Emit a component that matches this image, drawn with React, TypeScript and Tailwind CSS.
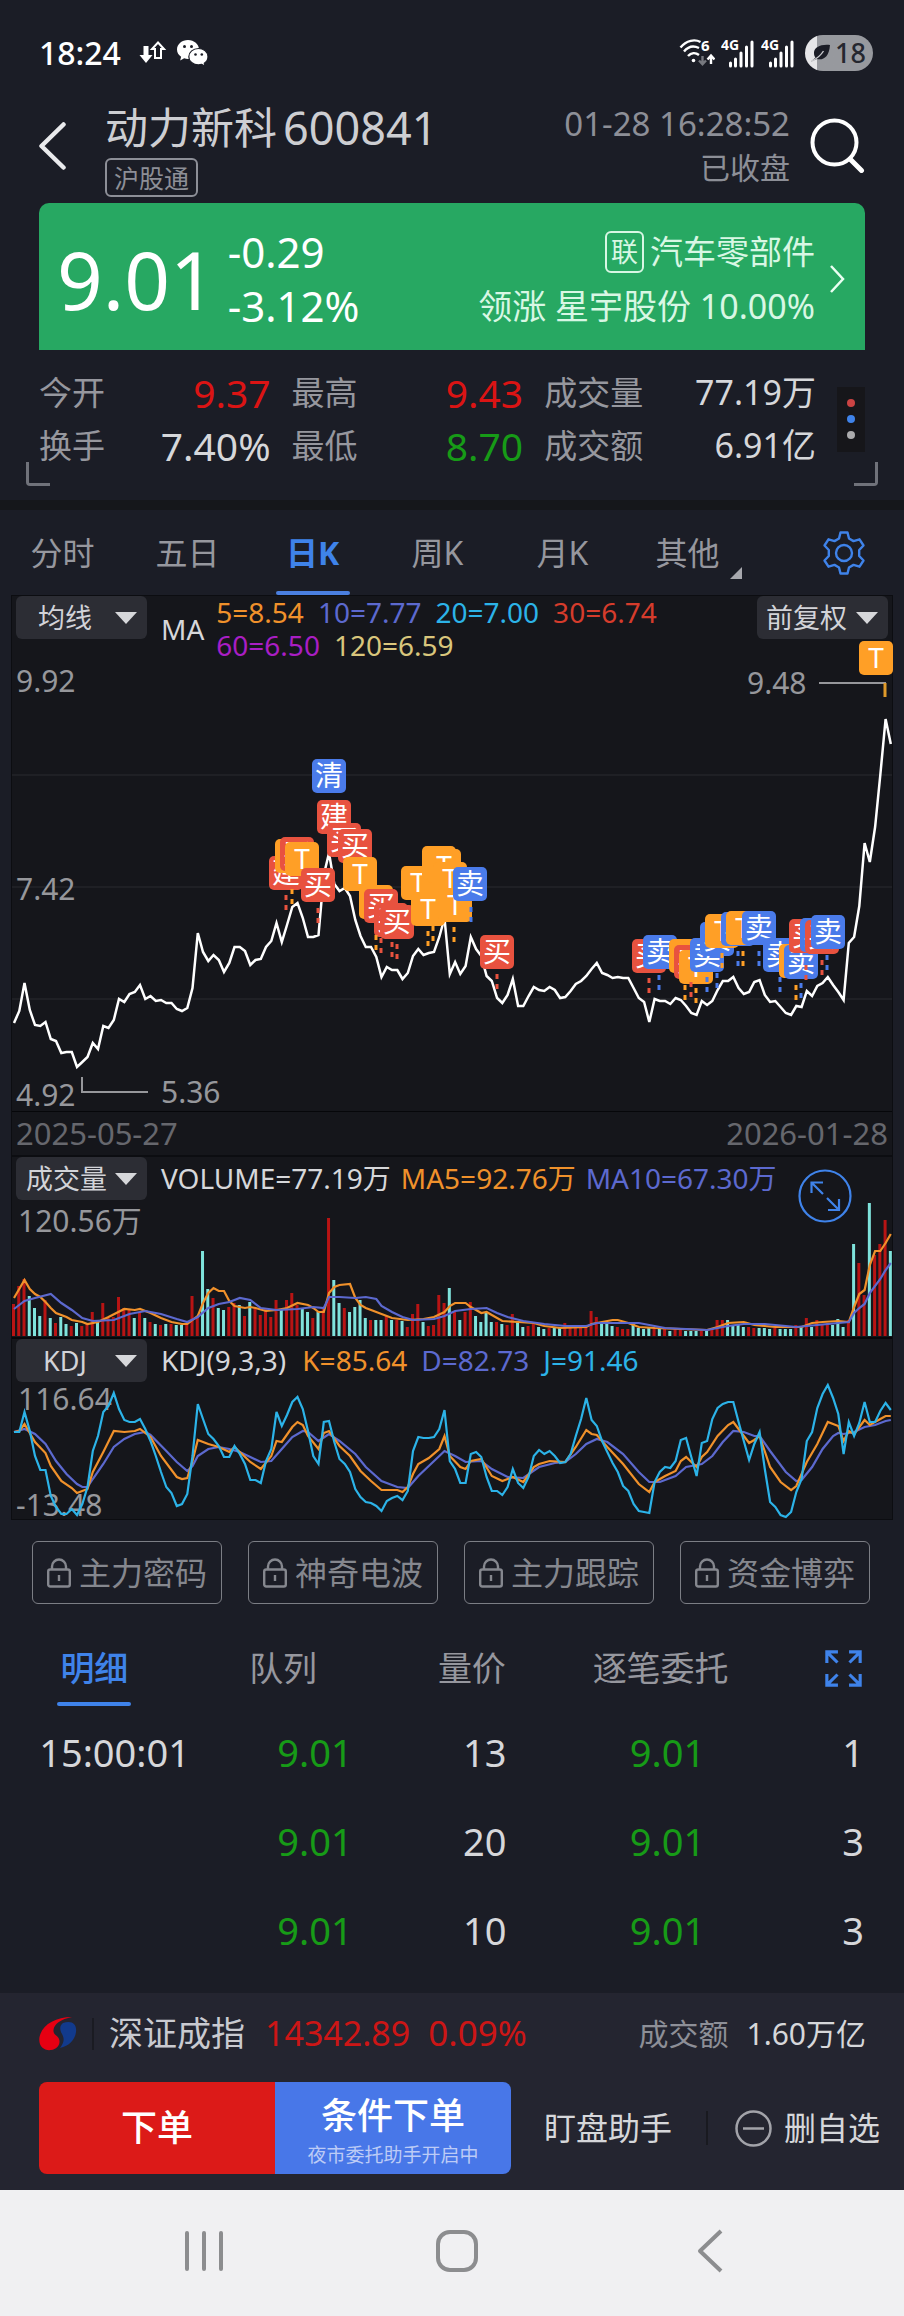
import React from 'react';

type Point = [number, number];
type Tone = 'red' | 'blue' | 'orange';

const TONES: Record<Tone, string> = {
  red: '#e8523f',
  blue: '#4a7bea',
  orange: '#ff9f26',
};

const BARS = 168;
const CHART_WIDTH = 880;
const STEP = CHART_WIDTH / (BARS - 0.4);

const xAt = (i: number) => 2 + i * STEP;
const toPath = (points: Point[]) => points.map(([i, y]) => `${xAt(i).toFixed(1)},${y}`).join(' ');

// "index:y" pairs, whitespace separated
const parse = (src: string): Point[] =>
  src
    .trim()
    .split(/\s+/)
    .map((pair) => pair.split(':').map(Number) as Point);

const CLOSES: Point[] = [
  363, 351, 323, 350, 365, 366, 362, 379, 381, 393, 392, 392, 407, 402, 397, 383, 389, 366, 368, 360,
  339, 342, 334, 332, 325, 339, 336, 341, 340, 343, 343, 349, 351, 348, 328, 273, 292, 301, 295, 300,
  312, 303, 287, 287, 291, 305, 300, 299, 287, 281, 263, 282, 265, 247, 243, 258, 277, 277, 275, 215,
  193, 224, 231, 228, 236, 260, 276, 287, 287, 297, 317, 307, 310, 310, 319, 313, 296, 289, 295, 293,
  292, 277, 258, 314, 302, 314, 306, 277, 289, 296, 316, 321, 338, 343, 335, 319, 346, 346, 336, 327,
  330, 331, 327, 330, 338, 337, 331, 324, 321, 316, 309, 303, 313, 315, 318, 317, 318, 318, 328, 338,
  342, 362, 339, 341, 341, 344, 338, 340, 346, 353, 355, 341, 345, 341, 330, 321, 321, 317, 328, 334,
  332, 322, 320, 335, 342, 341, 347, 353, 355, 346, 347, 331, 336, 326, 323, 317, 325, 332, 340, 283,
  277, 246, 183, 202, 167, 115, 59, 84,
].map((y, i) => [i, y]);

// r = up day, c = down day, followed by the bar height
const VOLUMES = `
r32 r50 r57 c40 c28 c20 r36 c18 r13 c19 c12 r10 c13 r10 r13 r24 c16 r33 r18 r19
r39 r28 r26 c18 r23 c18 r14 c12 r11 c12 r12 c11 c11 r12 r40 r19 c85 c47 r38 c28
c26 r29 r33 c31 r20 c34 r28 r21 r28 r19 r36 c26 r36 r43 r31 c28 c24 r18 c24 r28
r118 c56 c33 r28 c24 c29 c36 c18 r16 c16 c16 r20 c16 r16 c15 r9 r22 r32 c14 r10
r11 r41 r33 c48 r24 c16 r24 r34 c20 c14 c23 c14 r14 c12 r11 r22 c14 c9 r10 r12
c9 c7 r8 c8 c8 r13 r9 r9 r9 r9 r25 r19 c12 c12 c10 r9 r7 r7 c14 c8
c7 c8 r7 c8 r7 c5 r7 r6 c5 c5 c5 r5 c5 r7 r16 r16 c16 c11 c11 c9
r9 r8 c8 c8 c7 r8 c7 c7 c7 r11 c9 r18 c9 r16 r12 r13 c11 c17 c9 r16
c92 r73 r41 c133 r81 r92 r116 c85`
  .trim()
  .split(/\s+/);

const VOL_MA5 = parse(`0:98 2:80 3:89 4:94 5:97 6:102 7:108 8:113 10:117 11:120 13:122 14:124 16:122 18:117
21:109 23:110 24:109 26:113 28:118 30:122 32:124 33:124 34:120 35:116 36:103 37:93 38:88 39:91 40:91 41:101
42:106 44:108 45:107 46:108 48:111 50:110 52:108 54:103 56:105 57:108 58:112 59:112 60:93 61:87 62:85 64:84
65:98 66:105 67:108 69:112 72:118 75:120 78:119 80:117 82:112 83:106 84:103 86:103 87:107 88:110 89:113 90:112
91:115 93:121 96:122 99:123 101:126 104:128 109:127 110:124 112:122 114:120 115:120 117:123 119:127 122:128
132:130 134:127 136:123 139:122 141:125 145:127 150:127 152:123 154:122 157:121 159:122 160:107 161:94 162:90
163:65 164:51 165:51 166:43 167:34`);

const VOL_MA10 = parse(`0:109 2:101 4:98 7:94 9:103 11:110 13:118 15:121 19:120 22:114 25:111 28:114 31:119 33:122
35:117 37:108 39:104 41:102 43:98 45:100 47:108 50:110 54:109 57:107 59:108 60:97 62:97 65:98 67:97 69:99
70:106 72:112 74:117 76:120 80:119 82:116 84:111 87:109 90:108 92:113 94:117 97:121 101:124 105:126 109:126
111:123 115:123 119:123 124:128 132:130 136:126 139:124 143:124 149:127 153:125 159:122 160:113 161:108
162:104 163:93 165:79 166:70 167:63`);

const KDJ_K = parse(`0:50 1:49 2:42 4:60 6:71 7:84 9:99 11:106 12:111 14:107 15:90 17:70 19:49 21:50 23:49 24:47 26:55
28:74 31:95 32:97 33:96 34:79 35:58 37:62 39:65 41:70 42:65 45:80 47:87 49:74 50:59 51:60 53:45 54:40 55:43
56:54 58:67 59:51 60:49 62:64 64:74 66:89 68:99 70:108 73:108 74:110 75:105 76:92 77:82 79:76 81:67 82:54
83:74 85:85 86:87 87:79 89:77 91:94 93:99 95:95 97:100 99:85 100:82 102:79 105:80 107:65 109:48 110:52 111:53
113:65 116:82 119:102 121:110 122:100 124:94 126:89 127:79 128:75 130:85 131:75 132:70 134:54 136:43 137:40
138:47 140:61 141:58 142:54 144:85 146:100 148:108 149:104 151:80 153:62 155:40 157:44 158:59 159:49 160:52
162:38 163:43 165:37 166:34 167:34`);

const KDJ_D = parse(`0:50 2:47 4:52 6:62 8:79 10:92 12:102 13:105 14:105 15:97 17:82 19:65 21:57 23:52 25:50 26:53
29:69 31:80 33:89 34:84 35:74 37:67 39:65 41:67 43:70 45:75 47:80 49:79 51:67 53:55 55:49 56:50 58:59 60:52
62:59 65:72 67:85 70:99 73:105 75:106 77:94 79:84 81:74 82:69 84:74 86:80 89:79 91:87 94:95 97:96 100:85
103:81 105:80 107:72 109:62 111:57 113:60 116:72 119:90 121:100 123:100 126:94 128:85 131:82 133:74 135:60
137:49 139:50 141:54 142:54 144:69 147:90 149:99 150:98 152:85 154:67 156:54 157:51 158:52 160:50 162:45
164:43 166:39 167:38`);

const KDJ_J: Point[] = [
  50, 50, 30, 49, 74, 88, 88, 114, 125, 132, 132, 127, 133, 122, 105, 69, 54, 30, 24, 11,
  27, 38, 40, 40, 37, 47, 59, 74, 90, 105, 111, 124, 122, 112, 74, 22, 37, 52, 57, 64,
  75, 75, 64, 72, 82, 98, 98, 101, 79, 67, 30, 44, 33, 20, 15, 27, 49, 74, 82, 40,
  39, 60, 77, 82, 90, 107, 115, 120, 121, 124, 129, 119, 116, 114, 118, 109, 69, 55, 56, 56,
  55, 47, 28, 79, 87, 101, 101, 72, 70, 75, 95, 109, 109, 113, 105, 87, 101, 106, 95, 74,
  68, 72, 69, 74, 81, 80, 72, 54, 37, 16, 38, 44, 59, 70, 81, 90, 104, 109, 122, 129,
  130, 131, 100, 90, 85, 86, 79, 58, 56, 75, 94, 61, 59, 37, 26, 22, 20, 20, 40, 59,
  78, 62, 50, 87, 120, 125, 133, 135, 130, 110, 97, 59, 50, 26, 12, 3, 16, 32, 72, 40,
  54, 41, 20, 40, 40, 29, 21, 28,
].map((y, i) => [i, y]);

const MARKERS: [string, Tone, number, number][] = [
  ['建', 'red', 257, 196],
  ['T', 'orange', 263, 179],
  ['买', 'red', 268, 177],
  ['T', 'orange', 273, 182],
  ['买', 'red', 289, 208],
  ['清', 'blue', 300, 99],
  ['建', 'red', 305, 140],
  ['买', 'red', 315, 163],
  ['买', 'red', 326, 169],
  ['T', 'orange', 331, 197],
  ['T', 'orange', 347, 225],
  ['买', 'red', 352, 229],
  ['买', 'red', 362, 243],
  ['买', 'red', 368, 245],
  ['T', 'orange', 389, 206],
  ['T', 'orange', 410, 186],
  ['T', 'orange', 415, 189],
  ['T', 'orange', 421, 202],
  ['T', 'orange', 399, 232],
  ['T', 'orange', 426, 228],
  ['卖', 'blue', 441, 207],
  ['买', 'red', 468, 275],
  ['买', 'red', 620, 279],
  ['卖', 'blue', 631, 275],
  ['T', 'orange', 657, 279],
  ['买', 'red', 662, 285],
  ['T', 'orange', 667, 290],
  ['卖', 'blue', 678, 278],
  ['卖', 'blue', 688, 262],
  ['T', 'orange', 693, 254],
  ['卖', 'blue', 709, 252],
  ['T', 'orange', 714, 251],
  ['卖', 'blue', 730, 251],
  ['卖', 'blue', 751, 278],
  ['T', 'orange', 767, 284],
  ['卖', 'blue', 772, 285],
  ['买', 'red', 777, 259],
  ['卖', 'blue', 788, 258],
  ['买', 'red', 793, 260],
  ['卖', 'blue', 799, 255],
  ['T', 'orange', 847, -19],
];

const STEMS: [Tone, number, number][] = [
  ['red', 274, 235],
  ['orange', 280, 229],
  ['red', 306, 248],
  ['orange', 364, 275],
  ['red', 369, 278],
  ['red', 380, 282],
  ['red', 385, 284],
  ['orange', 416, 271],
  ['orange', 421, 266],
  ['orange', 442, 267],
  ['blue', 459, 247],
  ['red', 485, 314],
  ['red', 637, 318],
  ['blue', 647, 315],
  ['orange', 673, 325],
  ['red', 679, 322],
  ['orange', 684, 328],
  ['blue', 695, 317],
  ['blue', 705, 313],
  ['orange', 710, 293],
  ['blue', 726, 291],
  ['orange', 731, 291],
  ['blue', 747, 291],
  ['blue', 768, 317],
  ['orange', 784, 325],
  ['blue', 789, 323],
  ['red', 794, 305],
  ['red', 810, 300],
  ['blue', 815, 295],
];

const TRADES = [
  { time: '15:00:01', price: '9.01', volume: '13', orderPrice: '9.01', orderVolume: '1' },
  { time: '', price: '9.01', volume: '20', orderPrice: '9.01', orderVolume: '3' },
  { time: '', price: '9.01', volume: '10', orderPrice: '9.01', orderVolume: '3' },
];

function StatusBar() {
  return (
    <div className="flex h-[106px] items-center justify-between pr-[31px] pl-[39px]">
      <div className="flex items-center">
        <span className="text-[32px] leading-9 font-medium text-white">18:24</span>
        <svg className="ml-[18px]" width="28" height="24" viewBox="0 0 28 24">
          <path d="M4.500 5h5v9h4L7 22 .5 14h4z" fill="#fff" />
          <path d="M19 1.500l6 6.500h-3v9h-6V8h-3z" fill="none" stroke="#fff" strokeWidth="2" />
        </svg>
        <svg className="ml-2.5" width="32" height="27" viewBox="0 0 32 27">
          <path d="M11 0C4.900 0 0 4.200 0 9.500c0 3 1.600 5.600 4.100 7.300L3.200 20.500l4-2.200c1.200.4 2.500.6 3.800.6 6.100 0 11-4.200 11-9.400S17.100 0 11 0z" fill="#fff" />
          <circle cx="7.500" cy="6.500" r="1.500" fill="#1b1d26" />
          <circle cx="14.500" cy="6.500" r="1.500" fill="#1b1d26" />
          <path d="M21.500 8.500c-5.400 0-9.700 3.600-9.700 8.200s4.300 8.200 9.700 8.200c1.100 0 2.200-.2 3.200-.5l3.500 1.900-.9-3.100c2.300-1.500 3.700-3.800 3.700-6.500 0-4.600-4.200-8.200-9.500-8.200z" fill="#fff" stroke="#1b1d26" strokeWidth="1.200" />
          <circle cx="18.500" cy="14.500" r="1.300" fill="#1b1d26" />
          <circle cx="24.800" cy="14.500" r="1.300" fill="#1b1d26" />
        </svg>
      </div>
      <div className="flex items-center gap-1.5">
        <svg width="36" height="36" viewBox="0 0 36 36" fill="none" stroke="#fff">
          <path d="M1.500 12.500C7.500 5 16 4 21.500 7M5 16.500c4.500-5.500 10-6 15-3.500M9 21c3-3.300 7.500-3.700 11-1" strokeWidth="2.400" />
          <circle cx="14.500" cy="25.500" r="1.800" fill="#fff" stroke="none" />
          <path d="M23.500 21v8m-3.500-3.500l3.500 3.700 3.500-3.700" stroke="#77797f" strokeWidth="2.400" />
          <path d="M32 29v-8m-3.500 3.500L32 20.500l3.500 4" strokeWidth="2.400" />
          <text x="22" y="16" fill="#fff" stroke="none" className="text-[15px] font-bold">6</text>
        </svg>
        {['sim1', 'sim2'].map((sim) => (
          <svg key={sim} width="34" height="36" viewBox="0 0 34 36">
            <text x="0" y="15" fill="#fff" className="text-[14px] font-bold">4G</text>
            <path d="M9.500 28v3M14.500 24v7M20 18v13M25.500 12v19M31 7v24" stroke="#fff" strokeWidth="3" strokeLinecap="round" />
          </svg>
        ))}
        <div className="ml-1 flex h-9 w-[68px] items-center overflow-hidden rounded-full bg-linear-to-r from-[#e6e6e8] from-[18%] to-[#97999e] to-[18%] pl-1.5">
          <svg width="20" height="18" viewBox="0 0 20 18">
            <path d="M19 1C10 0 3 3 3 9c0 2 .6 3.500 1.500 4.500L0 17.500 6 15c6 1.500 12-1.500 13-14z" fill="#1b1d26" />
            <path d="M1 17C6 14.500 10 11 12.500 7" stroke="#c9cacd" strokeWidth="1.400" fill="none" />
          </svg>
          <span className="ml-1 text-[27px] leading-9 font-medium text-[#25272f]">18</span>
        </div>
      </div>
    </div>
  );
}

function Header() {
  return (
    <header className="flex h-[97px] items-start pr-[39px] pl-[39px]">
      <button type="button" aria-label="返回" className="mt-4">
        <svg width="28" height="48" viewBox="0 0 28 48" fill="none" stroke="#e9eaec" strokeWidth="4.500" strokeLinecap="round" strokeLinejoin="round">
          <path d="M24.500 2.500L2.500 24l22 21.500" />
        </svg>
      </button>
      <div className="ml-[38px]">
        <h1 className="flex items-center gap-1.5 leading-[43px] whitespace-nowrap text-[#cdced2]">
          <span className="text-[43px]">动力新科</span>
          <span className="text-[45px]">600841</span>
        </h1>
        <span className="mt-[9px] inline-block rounded-md border-2 border-[#8d8f97] px-[7px] pt-0.5 text-[25px] leading-[33px] text-[#8d8f97]">沪股通</span>
      </div>
      <div className="ml-auto text-right text-[#8d8f97]">
        <div className="text-[33px] leading-9">01-28 16:28:52</div>
        <div className="mt-2 text-[30px] leading-9">已收盘</div>
      </div>
      <button type="button" aria-label="搜索" className="mt-3 ml-5">
        <svg width="55" height="55" viewBox="0 0 55 55" fill="none" stroke="#fff" strokeLinecap="round">
          <circle cx="24.500" cy="24.500" r="22" strokeWidth="4" />
          <path d="M40 41l11.500 11.500" strokeWidth="5" />
        </svg>
      </button>
    </header>
  );
}

function QuoteCard() {
  return (
    <section className="mx-[39px] flex h-[147px] items-center rounded-t-[10px] bg-[#27a862] pt-1 pr-5 pl-[18px] text-white">
      <span className="text-[80px] leading-[80px]">9.01</span>
      <div className="ml-3 text-[42px] leading-[54px]">
        <div>-0.29</div>
        <div>-3.12%</div>
      </div>
      <a href="#sector" className="ml-auto flex items-center text-right text-[#d8f7e4]">
        <span>
          <span className="flex items-center justify-end gap-1.5 text-[33px] leading-[54px]">
            <span className="rounded-md border-2 border-[#d8f7e4] px-1 text-[27px] leading-[38px]">联</span>
            <span>汽车零部件</span>
          </span>
          <span className="block text-[34px] leading-[54px]">领涨 星宇股份 10.00%</span>
        </span>
        <svg className="ml-3.5" width="16" height="28" viewBox="0 0 16 28" fill="none" stroke="#e9fff2" strokeWidth="2.500">
          <path d="M2 1l12 13L2 27" />
        </svg>
      </a>
    </section>
  );
}

function Stat({ label, value, tone, large }: { label: string; value: string; tone: string; large?: boolean }) {
  return (
    <div className="flex h-[53px] items-center justify-between whitespace-nowrap">
      <dt className="text-[33px] leading-[53px] text-[#96979e]">{label}</dt>
      <dd className={`leading-[53px] ${large ? 'text-[39px]' : 'text-[34px]'} ${tone}`}>{value}</dd>
    </div>
  );
}

function Stats() {
  return (
    <section className="relative px-[39px] pt-4 pb-7">
      <dl className="grid grid-cols-[23fr_23fr_27fr_28px] gap-x-[21px]">
        <Stat label="今开" value="9.37" tone="text-[#db1414]" large />
        <Stat label="最高" value="9.43" tone="text-[#db1414]" large />
        <Stat label="成交量" value="77.19万" tone="text-[#d6d7da]" />
        <button type="button" aria-label="更多指标" className="row-span-2 flex h-[65px] flex-col items-center justify-center gap-2 self-center bg-[#16161a]">
          <span className="size-2 rounded-full bg-[#cb4343]" />
          <span className="size-2 rounded-full bg-[#3f83ea]" />
          <span className="size-2 rounded-full bg-[#ababad]" />
        </button>
        <Stat label="换手" value="7.40%" tone="text-[#d6d7da]" large />
        <Stat label="最低" value="8.70" tone="text-[#179b17]" large />
        <Stat label="成交额" value="6.91亿" tone="text-[#d6d7da]" />
      </dl>
      <span className="absolute bottom-3.5 left-[26px] h-6 w-6 rounded-bl border-b-3 border-l-3 border-[#70727a]" />
      <span className="absolute right-[26px] bottom-3.5 h-6 w-6 rounded-br border-r-3 border-b-3 border-[#70727a]" />
    </section>
  );
}

function PeriodTabs() {
  const tabs = ['分时', '五日', '日K', '周K', '月K', '其他'];
  return (
    <nav className="box-content flex h-[85px] border-t-10 border-[#15171b]">
      <div className="grid flex-1 grid-cols-6">
        {tabs.map((tab) => {
          const active = tab === '日K';
          return (
            <button
              key={tab}
              type="button"
              className={`relative text-[32px] leading-[85px] ${active ? 'font-bold text-[#3f83ea]' : 'text-[#96979e]'}`}
            >
              {tab}
              {active && <span className="absolute bottom-0 left-1/2 h-1 w-[74px] -translate-x-1/2 rounded-full bg-[#4a7fe0]" />}
              {tab === '其他' && (
                <svg className="absolute right-2 bottom-4" width="12" height="12" viewBox="0 0 12 12">
                  <path d="M12 0v12H0z" fill="#a7a8ad" />
                </svg>
              )}
            </button>
          );
        })}
      </div>
      <button type="button" aria-label="设置" className="mr-[38px] ml-[72px]">
        <svg width="44" height="44" viewBox="0 0 44 44" fill="none" stroke="#3f83ea" strokeWidth="2.400" strokeLinejoin="round">
          <path d="M18.500 1.500h7l1.500 6 4.500 2.600 6-1.800 4 6.200-4.300 4.500v6l4.300 4.500-4 6.200-6-1.800-4.500 2.600-1.500 6h-7l-1.500-6-4.500-2.600-6 1.800-4-6.200 4.300-4.500v-6L2.500 14.500l4-6.200 6 1.800L17 7.500z" />
          <circle cx="22" cy="22" r="8" />
        </svg>
      </button>
    </nav>
  );
}

function Picker({ label, options, pad }: { label: string; options: string[]; pad: string }) {
  return (
    <label className="relative block w-[131px] shrink-0">
      <select
        aria-label={label}
        className={`block h-[43px] w-full appearance-none rounded-md bg-[#2c2d34] text-[27px] leading-[43px] text-[#d2d3d8] ${pad}`}
      >
        {options.map((option) => (
          <option key={option}>{option}</option>
        ))}
      </select>
      <svg className="pointer-events-none absolute top-4 right-2.5" width="22" height="12" viewBox="0 0 22 12">
        <path d="M0 0h22L11 12z" fill="#d6d7da" />
      </svg>
    </label>
  );
}

function PriceChart() {
  return (
    <svg className="block h-auto w-full overflow-visible" viewBox="0 0 880 452" role="img" aria-label="日K走势">
      <path d="M0 115h880M0 227h880M0 339h880" stroke="#1f2025" strokeWidth="2" />
      <path d="M0 451.500h880" stroke="#06070a" strokeWidth="1" />
      <g fill="#96979b" className="text-[30px]">
        <text x="4" y="32">9.92</text>
        <text x="4" y="240">7.42</text>
        <text x="4" y="446">4.92</text>
        <text x="149" y="443">5.36</text>
        <text x="735" y="34">9.48</text>
      </g>
      <path d="M70 417v15h66M807 23h66v14" fill="none" stroke="#96979b" strokeWidth="2" />
      <polyline points={toPath(CLOSES)} fill="none" stroke="#fff" strokeWidth="2.500" />
      {MARKERS.map(([text, tone, x, y], i) => (
        <g key={i}>
          <rect x={x} y={y} width="34" height="34" rx="5" fill={TONES[tone]} />
          <text x={x + 17} y={y + 27} textAnchor="middle" fill="#fff" className="text-[28px]">
            {text}
          </text>
        </g>
      ))}
      {STEMS.map(([tone, x, y]) => (
        <path key={`${x}-${y}`} d={`M${x} ${y}v16`} stroke={TONES[tone]} strokeWidth="3" strokeDasharray="5 5" />
      ))}
      <path d="M873 23v14" stroke="#e09a2a" strokeWidth="3" />
    </svg>
  );
}

function VolumeChart() {
  return (
    <svg className="block h-auto w-full" viewBox="0 0 880 139" role="img" aria-label="成交量">
      <text x="6" y="32" fill="#96979b" className="text-[30px]">120.56万</text>
      {VOLUMES.map((bar, i) => {
        const height = Number(bar.slice(1));
        return (
          <rect key={i} x={xAt(i) - 2} y={136 - height} width="3" height={height} fill={bar[0] === 'r' ? '#b81414' : '#7fe3dc'} />
        );
      })}
      <polyline points={toPath(VOL_MA5)} fill="none" stroke="#f0912b" strokeWidth="2.200" />
      <polyline points={toPath(VOL_MA10)} fill="none" stroke="#5c69cf" strokeWidth="2.200" />
      <path d="M0 138h880" stroke="#06070a" strokeWidth="2" />
    </svg>
  );
}

function KdjChart() {
  return (
    <svg className="block h-auto w-full overflow-visible" viewBox="0 0 880 137" role="img" aria-label="KDJ">
      <g fill="#96979b" className="text-[30px]">
        <text x="6" y="28">116.64</text>
        <text x="4" y="134">-13.48</text>
      </g>
      <polyline points={toPath(KDJ_D)} fill="none" stroke="#5c69cf" strokeWidth="2.200" />
      <polyline points={toPath(KDJ_K)} fill="none" stroke="#f0912b" strokeWidth="2.200" />
      <polyline points={toPath(KDJ_J)} fill="none" stroke="#2cb3e8" strokeWidth="2.200" />
    </svg>
  );
}

function Charts() {
  return (
    <section className="mx-[11px] border border-[#0c0d11] bg-[#15161b]">
      <div className="flex h-16 items-start justify-between pr-1 pl-1">
        <div className="flex">
          <Picker label="主图指标" options={['均线', 'BOLL']} pad="pl-[22px]" />
          <span className="mt-4 ml-3.5 text-[28px] leading-[34px] text-[#d6d7da]">MA</span>
          <div className="ml-3 text-[28px] leading-[33px] whitespace-nowrap">
            <div className="flex gap-3.5">
              <span className="text-[#f0912b]">5=8.54</span>
              <span className="text-[#5c69cf]">10=7.77</span>
              <span className="text-[#2cb3e8]">20=7.00</span>
              <span className="text-[#d63c2c]">30=6.74</span>
            </div>
            <div className="flex gap-3.5">
              <span className="text-[#a91ec4]">60=6.50</span>
              <span className="text-[#d9c67c]">120=6.59</span>
            </div>
          </div>
        </div>
        <Picker label="复权方式" options={['前复权', '后复权', '不复权']} pad="pl-[9px]" />
      </div>
      <PriceChart />
      <div className="flex h-[45px] items-center justify-between border-b-2 border-[#0c0d11] px-1 text-[31px] text-[#66676d]">
        <time>2025-05-27</time>
        <time>2026-01-28</time>
      </div>
      <div className="relative">
        <div className="flex pl-1 text-[28px] leading-[43px] whitespace-nowrap">
          <Picker label="副图指标一" options={['成交量', 'MACD']} pad="pl-[10px]" />
          <span className="ml-3.5 text-[#d6d7da]">VOLUME=77.19万</span>
          <span className="ml-2.5 text-[#f0912b]">MA5=92.76万</span>
          <span className="ml-2.5 text-[#5c69cf]">MA10=67.30万</span>
        </div>
        <VolumeChart />
        <button type="button" aria-label="全屏" className="absolute top-3 right-10">
          <svg width="54" height="54" viewBox="0 0 54 54" fill="none" stroke="#3f83ea" strokeWidth="2.200">
            <circle cx="27" cy="27" r="25.500" />
            <path d="M25 25L13.500 13.500M13.500 24V13.500H25M29 29l12 12M41 30v11H30" />
          </svg>
        </button>
      </div>
      <div className="flex pl-1 text-[28px] leading-[43px] whitespace-nowrap">
        <Picker label="副图指标二" options={['KDJ', 'RSI']} pad="pl-[27px]" />
        <span className="ml-3.5 text-[#d6d7da]">KDJ(9,3,3)</span>
        <span className="ml-4 text-[#f0912b]">K=85.64</span>
        <span className="ml-3.5 text-[#5c69cf]">D=82.73</span>
        <span className="ml-3.5 text-[#2cb3e8]">J=91.46</span>
      </div>
      <KdjChart />
    </section>
  );
}

function LockedTools() {
  return (
    <section className="grid grid-cols-4 gap-[26px] pt-[21px] pr-[34px] pl-8">
      {['主力密码', '神奇电波', '主力跟踪', '资金博弈'].map((name) => (
        <button
          key={name}
          type="button"
          className="flex h-[63px] items-center justify-center gap-2 rounded-md border border-[#7c7e85] text-[32px] whitespace-nowrap text-[#85878e]"
        >
          <svg className="shrink-0" width="24" height="30" viewBox="0 0 24 30" fill="none" stroke="#85878e" strokeWidth="2.400">
            <rect x="1.200" y="11.500" width="21.600" height="17" rx="2" />
            <path d="M5 11.500V8.500a7 7 0 0 1 14 0v3M12 17v6" />
          </svg>
          {name}
        </button>
      ))}
    </section>
  );
}

function TradeTabs() {
  return (
    <nav className="mt-[26px] flex h-[76px] pr-[42px]">
      <div className="grid flex-1 grid-cols-4">
        {['明细', '队列', '量价', '逐笔委托'].map((tab) => {
          const active = tab === '明细';
          return (
            <button
              key={tab}
              type="button"
              className={`relative text-[34px] leading-[76px] ${active ? 'font-medium text-[#3f83ea]' : 'text-[#96979e]'}`}
            >
              {tab}
              {active && <span className="absolute bottom-0 left-1/2 h-1 w-[74px] -translate-x-1/2 rounded-full bg-[#3f83ea]" />}
            </button>
          );
        })}
      </div>
      <button type="button" aria-label="展开" className="ml-[70px]">
        <svg width="37" height="37" viewBox="0 0 40 40" fill="none" stroke="#3f83ea" strokeWidth="3.400">
          <path d="M2 14V2h12M3 3l10.500 10.500M26 2h12v12M37 3L26.500 13.500M2 26v12h12M3 37l10.500-10.500M26 38h12V26M37 37L26.500 26.500" />
        </svg>
      </button>
    </nav>
  );
}

function TradeTable() {
  return (
    <table className="mt-0.5 mb-[18px] w-full table-fixed text-right text-[38px] text-[#d6d7da]">
      <colgroup>
        <col className="w-[190px]" />
        <col className="w-[18%]" />
        <col className="w-[17%]" />
        <col className="w-[22%]" />
        <col />
      </colgroup>
      <tbody>
        {TRADES.map((trade, i) => (
          <tr key={i} className="h-[89px]">
            <td className="p-0">{trade.time}</td>
            <td className="p-0 text-[#179b17]">{trade.price}</td>
            <td className="p-0">{trade.volume}</td>
            <td className="p-0 text-[#179b17]">{trade.orderPrice}</td>
            <td className="py-0 pr-10 pl-0">{trade.orderVolume}</td>
          </tr>
        ))}
      </tbody>
    </table>
  );
}

function BottomPanel() {
  return (
    <footer className="bg-[#242530] pb-4">
      <div className="flex h-[89px] items-center pr-[38px] pb-2 pl-[39px] whitespace-nowrap">
        <svg width="38" height="34" viewBox="0 0 38 34">
          <path d="M33 0C16 0 3 8 .5 20-1 29 5 34 12 33c6-1 10-6 8-11-1.500-4-6-4-5.500-9C15 7 22 2 33 0z" fill="#e60012" />
          <path d="M24 6c9-3 14 1 13 9-1 8-7 14-16 16 5-7 4-10 2-14-2-4-3-8 1-11z" fill="#123a8c" />
        </svg>
        <span className="ml-[15px] h-8 w-0.5 bg-[#1a1b22]" />
        <span className="ml-[15px] text-[34px] text-[#c9cad0]">深证成指</span>
        <span className="ml-5 text-[34px] text-[#cc1616]">14342.89</span>
        <span className="ml-[18px] text-[35px] text-[#cc1616]">0.09%</span>
        <span className="ml-auto text-[30px] text-[#8d8f97]">成交额</span>
        <span className="ml-[18px] text-[30px] text-[#d6d7da]">1.60万亿</span>
      </div>
      <div className="flex items-center pr-6 pl-[39px] whitespace-nowrap text-[#d6d7da]">
        <button type="button" className="h-[92px] w-[236px] rounded-l-lg bg-[#dc1a18] text-[36px] font-medium text-white">
          下单
        </button>
        <button type="button" className="flex h-[92px] w-[236px] flex-col items-center justify-center rounded-r-lg bg-[#4877e8] pt-1 text-white">
          <span className="text-[36px] leading-[50px] font-medium">条件下单</span>
          <span className="text-[19px] leading-7 text-[#bccbf6]">夜市委托助手开启中</span>
        </button>
        <button type="button" className="ml-[33px] text-[32px]">盯盘助手</button>
        <span className="ml-auto h-[34px] w-0.5 bg-[#191a20]" />
        <button type="button" className="ml-[27px] flex items-center gap-3 text-[32px]">
          <svg width="37" height="37" viewBox="0 0 37 37" fill="none" stroke="#a2a3a9" strokeWidth="2.500">
            <circle cx="18.500" cy="18.500" r="17" />
            <path d="M8 18.500h21" />
          </svg>
          删自选
        </button>
      </div>
    </footer>
  );
}

function SystemNav() {
  return (
    <nav className="grid h-[126px] grid-cols-[253px_253px_253px] place-items-center justify-center bg-[#f0f0f2] pb-1 pl-2.5">
      <button type="button" aria-label="最近任务">
        <svg width="40" height="42" viewBox="0 0 40 42" stroke="#8c8d8f" strokeWidth="4" strokeLinecap="round">
          <path d="M3 3v36M20 3v36M37 3v36" />
        </svg>
      </button>
      <button type="button" aria-label="主屏幕">
        <svg width="42" height="42" viewBox="0 0 42 42" fill="none" stroke="#8c8d8f" strokeWidth="4">
          <rect x="2" y="2" width="38" height="38" rx="12" />
        </svg>
      </button>
      <button type="button" aria-label="返回上级">
        <svg width="26" height="44" viewBox="0 0 26 44" fill="none" stroke="#8c8d8f" strokeWidth="4" strokeLinejoin="round">
          <path d="M24 2L3 22l21 20" />
        </svg>
      </button>
    </nav>
  );
}

export default function App() {
  return (
    <div className="bg-[#1b1d26] font-['Noto_Sans','Noto_Sans_CJK_SC',sans-serif]">
      <StatusBar />
      <Header />
      <QuoteCard />
      <Stats />
      <PeriodTabs />
      <Charts />
      <LockedTools />
      <TradeTabs />
      <TradeTable />
      <BottomPanel />
      <SystemNav />
    </div>
  );
}
